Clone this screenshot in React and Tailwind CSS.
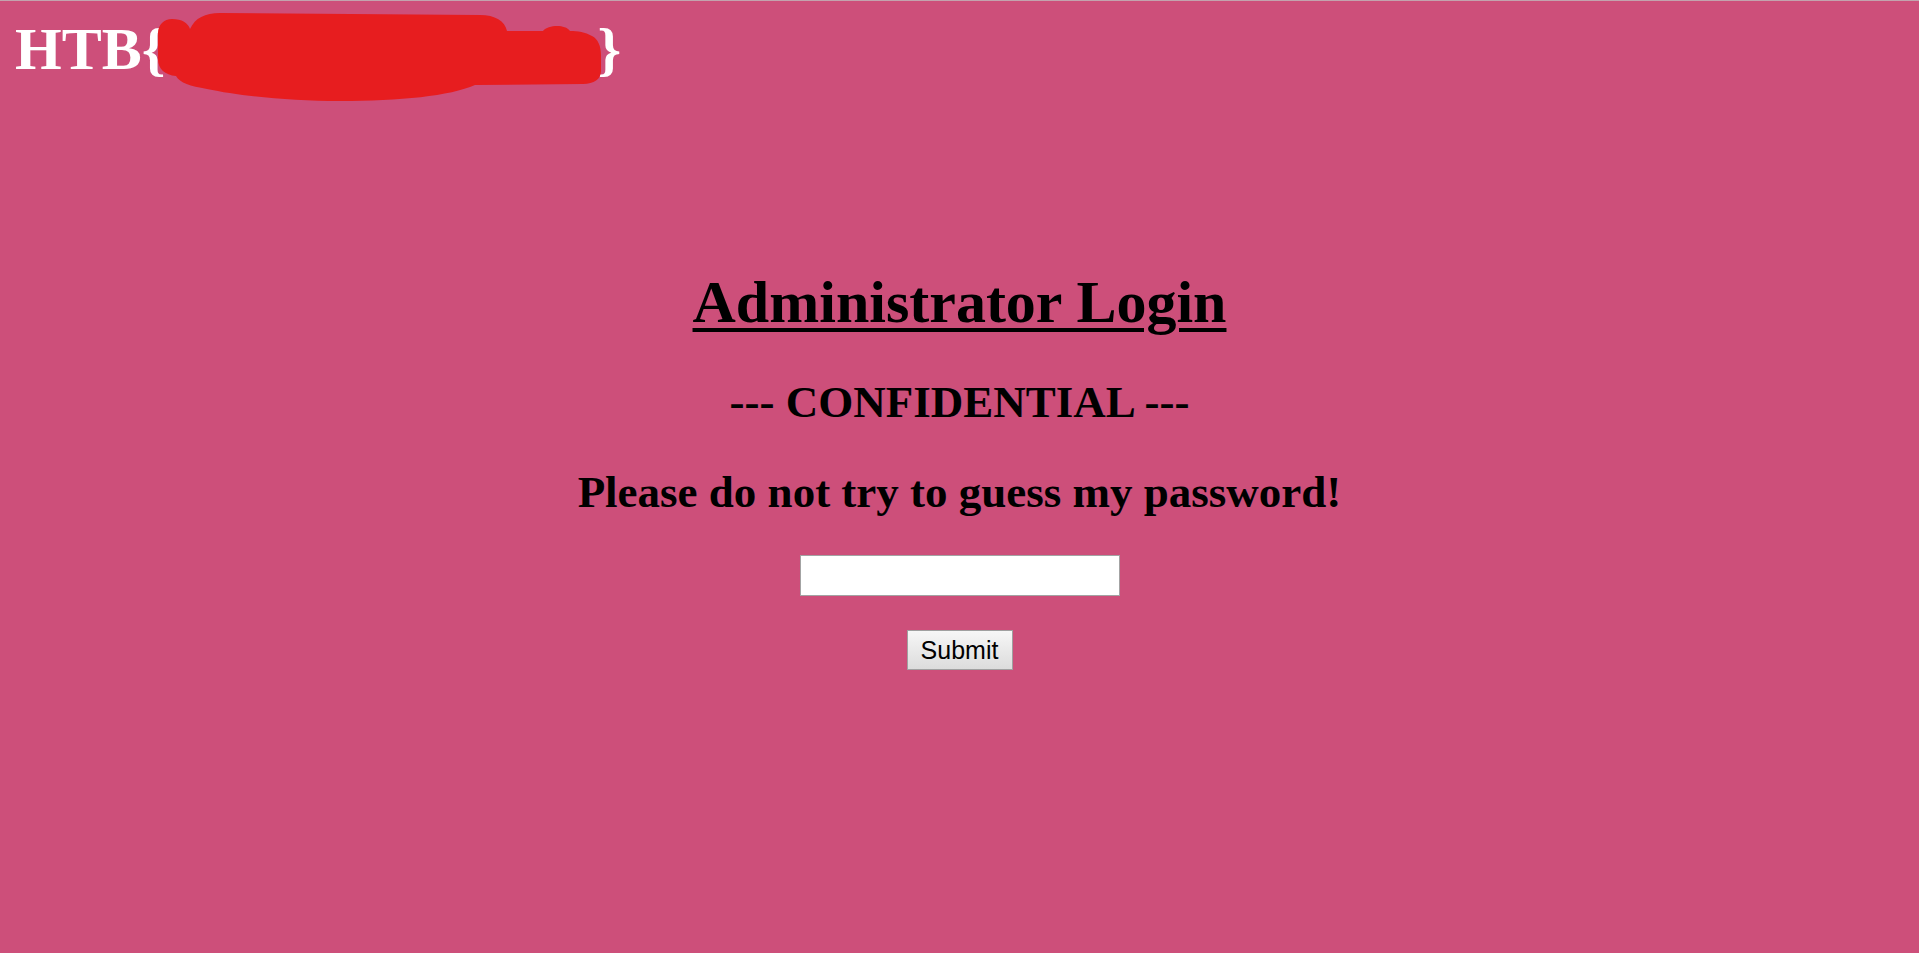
import React from 'react';

const Redaction = () => (
    <svg className="absolute left-0 top-0 pointer-events-none" width="620" height="110" viewBox="0 0 620 110">
        <path
            fill="#e71d1f"
            d="M172 18 C182 18 188 22 190 28 C195 17 205 12 220 12 L480 14 C495 14 505 20 507 30 L543 30 C548 24 565 23 570 30 C578 30 585 31 592 35 C598 38 601 45 601 55 L601 70 C601 78 594 83 583 83 L475 84 C450 95 400 100 340 100 C290 100 240 95 207 88 C190 85 180 82 176 75 C165 74 158 68 158 58 L158 32 C158 24 164 18 172 18 Z"
        />
    </svg>
);

const App = () => {
    return (
        <div className="w-full min-h-screen bg-[#cd4f7a] border-t border-[#c3a3ae] font-['Liberation_Serif',serif] text-black">
            <div className="relative pl-[15px] pt-[15px] text-[60px] leading-[66px] font-bold text-white whitespace-nowrap">
                HTB{'{'}<span className="inline-block w-[432px]"></span>{'}'}
                <Redaction />
            </div>

            <main className="flex flex-col items-center">
                <h1 className="mt-[187px] text-[60px] leading-[66px] font-bold underline decoration-[4px] underline-offset-[6px]">
                    Administrator Login
                </h1>
                <h2 className="mt-[42px] text-[45px] leading-[50px] font-bold">--- CONFIDENTIAL ---</h2>
                <h2 className="mt-[40px] text-[45px] leading-[50px] font-bold">Please do not try to guess my password!</h2>

                <form className="flex flex-col items-center" onSubmit={(e) => e.preventDefault()}>
                    <input
                        type="password"
                        className="mt-[38px] w-[320px] h-[41px] bg-white border border-[#a3a3a3] outline-none px-2 text-[25px]"
                    />
                    <button
                        type="submit"
                        className="mt-[34px] w-[106px] h-[40px] border border-[#a0a0a0] bg-gradient-to-b from-[#f7f7f7] to-[#dcdcdc] font-['Liberation_Sans',sans-serif] text-[25px] leading-none text-black"
                    >
                        Submit
                    </button>
                </form>
            </main>
        </div>
    );
};

export default App;
